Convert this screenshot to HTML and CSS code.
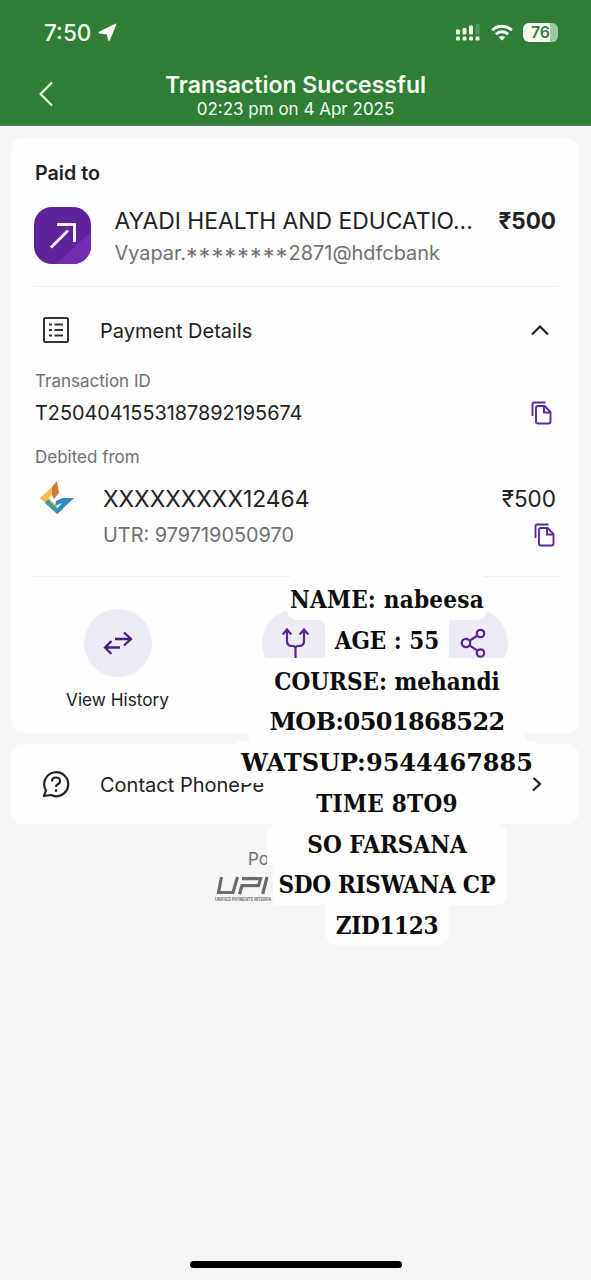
FILE: index.html
```html
<!DOCTYPE html>
<html lang="en">
<head>
<meta charset="utf-8">
<title>Transaction Successful</title>
<link rel="stylesheet" href="styles.css">
</head>
<body>
<div class="screen">
  <header class="top">
    <div class="status">
      <div class="status-left">
        <span class="clock">7:50</span>
        <svg width="19" height="19" viewBox="0 0 19 19"><path d="M17.500 1.500 11 17 9.500 10.500 1.500 9.500Z" fill="#fff" stroke="#fff" stroke-width="1.800" stroke-linejoin="round"/></svg>
      </div>
      <div class="status-right">
        <svg width="26" height="17" viewBox="0 0 26 17" fill="#eefbe9"><rect x="1" y="5.500" width="4" height="5" rx="1"/><rect x="7.500" y="4" width="4" height="6.500" rx="1"/><rect x="14" y="1.500" width="4" height="9" rx="1"/><rect x="20.500" y="0" width="4" height="10.500" rx="1" opacity=".2"/><rect x="1" y="12.500" width="4" height="4" rx="1.200"/><rect x="7.500" y="12.500" width="4" height="4" rx="1.200"/><rect x="14" y="12.500" width="4" height="4" rx="1.200"/><rect x="20.500" y="12.500" width="4" height="4" rx="1.200"/></svg>
        <svg class="wifi" width="22" height="17" viewBox="0 0 22 17" fill="none" stroke="#fff" stroke-width="2.900"><path d="M1.200 6.200a14 14 0 0 1 19.600 0"/><path d="M4.900 10.200a8.700 8.700 0 0 1 12.200 0"/><path d="M11 16.500 7.800 13.300a4.600 4.600 0 0 1 6.400 0Z" fill="#fff" stroke="none"/></svg>
        <span class="battery"><span class="battery-level">76</span></span>
      </div>
    </div>
    <div class="nav">
      <svg class="back" width="16" height="26" viewBox="0 0 16 26"><path d="M13.500 2 2.500 13l11 11" fill="none" stroke="#e8fbe4" stroke-width="2.200" stroke-linecap="round" stroke-linejoin="round"/></svg>
      <div class="titles">
        <h1>Transaction Successful</h1>
        <p>02:23 pm on 4 Apr 2025</p>
      </div>
    </div>
  </header>

  <main class="content">
    <section class="card">
      <h2 class="paid">Paid to</h2>
      <div class="payee">
        <svg class="tile" width="57" height="57" viewBox="0 0 57 57"><rect width="57" height="57" rx="18" fill="#5f239c"/><path d="M22 57 57 25v14a18 18 0 0 1-18 18Z" fill="#732db2"/><path d="M17 40.500 34 23.500M23 17.500h17.500V35" fill="none" stroke="#f8ebfa" stroke-width="3"/></svg>
        <div class="payee-text">
          <span class="payee-name">AYADI HEALTH AND EDUCATIO...</span>
          <span class="payee-vpa">Vyapar.<span class="stars">********</span>2871@hdfcbank</span>
        </div>
        <strong class="amount">₹500</strong>
      </div>
      <hr>
      <div class="row details">
        <svg class="lead" width="28" height="28" viewBox="0 0 28 28" fill="none" stroke="#333" stroke-width="2"><rect x="2" y="2" width="24" height="24" rx="1.500"/><path d="M7 8.500h3M12.500 8.500H21M7 14h3M12.500 14H21M7 19.500h3M12.500 19.500H21"/></svg>
        <span class="row-title">Payment Details</span>
        <svg class="chev" width="20" height="12" viewBox="0 0 20 12"><path d="M2 10.500 10 2.500l8 8" fill="none" stroke="#222" stroke-width="2.200"/></svg>
      </div>
      <div class="label label-id">Transaction ID</div>
      <div class="row txn">
        <span class="txn-id">T2504041553187892195674</span>
        <svg class="copy" width="21" height="24" viewBox="0 0 21 24" fill="none" stroke="#5a2a96" stroke-width="1.900"><path d="M1.500 15V3q0-1.500 1.500-1.500h11.500"/><path d="M7 5h6.500l6 6v9.500q0 2-2 2H7q-2 0-2-2V7q0-2 2-2Z" stroke-linejoin="round"/><path d="M13 5v6.500h6.500"/></svg>
      </div>
      <div class="label label-from">Debited from</div>
      <div class="row bank">
        <svg class="bank-logo" width="36" height="34" viewBox="0 0 36 34"><path d="M1 17 13 6v7l-3 4 8 9v6Z" fill="#f4bd4a"/><path d="M13 14V6l5-6 2 12-5 6Z" fill="#cf793d"/><path d="M9 18 6 22l12 11 6-5-6-1Z" fill="#459c96"/><path d="M18 33 35 17H23l-6 3-1 5 7-3-5 6Z" fill="#3188c2"/></svg>
        <span class="account">XXXXXXXXX12464</span>
        <span class="debit">₹500</span>
      </div>
      <div class="row utr">
        <span class="utr-id">UTR: 979719050970</span>
        <svg class="copy2" width="21" height="24" viewBox="0 0 21 24" fill="none" stroke="#5a2a96" stroke-width="1.900"><path d="M1.500 15V3q0-1.500 1.500-1.500h11.500"/><path d="M7 5h6.500l6 6v9.500q0 2-2 2H7q-2 0-2-2V7q0-2 2-2Z" stroke-linejoin="round"/><path d="M13 5v6.500h6.500"/></svg>
      </div>
      <hr>
      <div class="actions">
        <div class="action">
          <span class="disc"><svg width="30" height="24" viewBox="0 0 30 24" fill="none" stroke="#4b1c85" stroke-width="2.300"><path d="M12 8h16M21 1.500 28 8l-7 6.500M17 16.500H2M8.500 10 2 16.500 8.500 23"/></svg></span>
          <span class="action-label">View History</span>
        </div>
        <div class="action">
          <span class="disc"><svg width="28" height="32" viewBox="0 0 28 32" fill="none" stroke="#5a2690" stroke-width="2.200"><path d="M5 3v11q0 5 5 5h1q2.500 0 2.500 3v9M22 3v11q0 5-5 5h-1q-2.500 0-2.500 3M.7 7.500 5 2.500l4.300 5M17.700 7.500l4.300-5 4.300 5"/></svg></span>
        </div>
        <div class="action">
          <span class="disc"><svg width="28" height="30" viewBox="0 0 28 30" fill="none" stroke="#5a2690" stroke-width="2.300"><circle cx="6" cy="15" r="4.200"/><circle cx="20.500" cy="5.500" r="3.700"/><circle cx="20.500" cy="25" r="3.700"/><path d="m9.500 12.700 7.700-5M9.500 17.400l7.700 5"/></svg></span>
        </div>
      </div>
    </section>

    <section class="card contact row">
      <svg class="lead" width="28" height="28" viewBox="0 0 28 28" fill="none" stroke="#222" stroke-width="2.200"><path d="M2 26 4 20.500A12 12 0 1 1 9 25Z" stroke-linejoin="round"/><path d="M10 11.500q0-4 4-4t4 3.500q0 2.200-2.200 3.300Q14 15.200 14 17M14 19.200v2.500"/></svg>
      <span class="row-title">Contact PhonePe</span>
      <svg class="chev-right" width="12" height="18" viewBox="0 0 12 18"><path d="m2 2.500 7 6.500-7 6.500" fill="none" stroke="#222" stroke-width="2.200"/></svg>
    </section>

    <footer class="powered">
      <span class="powered-text">Po</span>
      <svg width="58" height="28" viewBox="0 0 58 28"><g fill="none" stroke="#6b6b6b" stroke-width="3.200"><path d="M7.500 2 4.500 17.500h14.500L23.500 2"/><path d="M25.500 19.200l2.500-8.500h16.500L46.500 3.600H28"/><path d="M53 2l-4.300 17"/></g><text class="upi-tag" x="1" y="25.500" textLength="56" lengthAdjust="spacingAndGlyphs">UNIFIED PAYMENTS INTERFA</text></svg>
    </footer>
  </main>

  <div class="home-bar"></div>

  <div class="note">
    <p class="n1">NAME: nabeesa</p>
    <p class="n2">AGE : 55</p>
    <p class="n3">COURSE: mehandi</p>
    <p class="n4">MOB:0501868522</p>
    <p class="n5">WATSUP:9544467885</p>
    <p class="n6">TIME 8TO9</p>
    <p class="n7">SO FARSANA</p>
    <p class="n8">SDO RISWANA CP</p>
    <p class="n9">ZID1123</p>
  </div>
</div>
</body>
</html>
```
FILE: styles.css
```css
* { box-sizing: border-box; margin: 0; padding: 0; }
body { background: #f6f6f6; font-family: Inter, "Liberation Sans", sans-serif; color: #222; }
svg { display: block; flex: none; overflow: visible; }
span, strong, h1, h2, p, .label { white-space: nowrap; }
.screen { position: relative; width: 591px; height: 1280px; display: flex; flex-direction: column; overflow: hidden; }

.top { height: 126px; background: #307d36; border-bottom: 2px solid #4c7f50; color: #f3fff0; }
.status { height: 65px; padding: 0 31px 0 44px; display: flex; justify-content: space-between; align-items: center; }
.status-left { display: flex; align-items: center; gap: 7px; }
.clock { font-size: 22.5px; font-weight: 500; }
.status-right { display: flex; align-items: center; }
.wifi { margin: 0 10px 0 10px; }
.battery { width: 37px; padding-right: 2px; }
.battery-level { display: block; width: 35px; height: 19px; border-radius: 6px; background: linear-gradient(90deg, #f2fced 77%, #a2c8a2 77%); color: #427747; font-size: 16px; line-height: 19px; font-weight: 600; text-align: center; }
.nav { display: flex; height: 59px; padding-left: 38px; padding-top: 6px; }
.back { margin-top: 10px; }
.titles { flex: 1; margin-right: 54px; text-align: center; }
.titles h1 { font-size: 23px; line-height: 28px; font-weight: 600; }
.titles p { font-size: 17px; line-height: 20px; }

.content { padding: 12px 12px 0 11px; }
.card { background: #fdfdfd; border-radius: 12px; }
.card:first-child { height: 595px; padding: 0 23px 0 24px; }
.paid { height: 69px; line-height: 70px; font-size: 19.7px; font-weight: 600; }
.payee { display: flex; height: 57px; margin-bottom: 22px; }
.tile { margin-left: -1px; }
.payee-text { display: flex; flex-direction: column; margin-left: 23.5px; }
.payee-name { font-size: 22.85px; line-height: 28px; }
.payee-vpa { font-size: 19.9px; line-height: 36px; color: #717171; }
.stars { font-size: 23px; letter-spacing: 1.3px; vertical-align: -5px; line-height: 1; }
.amount { margin-left: auto; font-size: 22.5px; line-height: 28px; font-weight: 700; }
hr { height: 1px; border: 0; background: #efefef; margin: 0 -3px 0 -2px; }
.row { display: flex; align-items: center; }
.lead { margin-left: 7px; }
.row-title { margin-left: 30px; font-size: 20px; line-height: 26px; padding-top: 1px; }
.details { height: 86px; }
.chev { margin-left: auto; margin-right: 6px; }
.label { font-size: 17px; color: #717171; }
.label-id { height: 16px; line-height: 16px; }
.txn { height: 48px; }
.txn-id { font-size: 19.85px; }
.copy { margin-left: auto; margin-right: 4px; }
.label-from { height: 40px; line-height: 40px; }
.bank { height: 42px; }
.bank-logo { margin-left: 4px; }
.account { margin-left: 28px; font-size: 22.8px; }
.debit { margin-left: auto; font-size: 22.5px; }
.utr { height: 32px; margin-bottom: 25px; }
.utr-id { margin-left: 68px; font-size: 19.9px; color: #717171; }
.copy2 { margin-left: auto; margin-right: 1px; }
.actions { display: grid; grid-template-columns: repeat(3, 178px); margin: 32px -9px 0 -6.5px; }
.action { display: flex; flex-direction: column; align-items: center; }
.disc { width: 68px; height: 68px; border-radius: 50%; background: #eeebf5; display: flex; align-items: center; justify-content: center; }
.action-label { margin-top: 11px; font-size: 17.2px; line-height: 24px; }
.contact { height: 80px; margin-top: 11px; padding: 0 24px; }
.chev-right { margin-left: auto; margin-right: 12px; }
.powered { margin-top: 24px; padding-left: 203px; }
.powered-text { display: block; padding-left: 34px; font-size: 17px; line-height: 22px; color: #717171; }
.powered svg { margin-top: 5px; }
.upi-tag { font-family: "Liberation Sans", sans-serif; font-size: 4.5px; font-weight: 700; fill: #666; }
.home-bar { width: 212px; height: 7px; margin: auto auto 12px; border-radius: 4px; background: #000; }

/* Typed caption laid over the receipt, one white band per line */
.note { position: absolute; top: 574px; left: 232px; width: 310px; display: flex; flex-direction: column; align-items: center; font-family: "DejaVu Serif Condensed", "DejaVu Serif", serif; font-stretch: semi-condensed; font-size: 24px; font-weight: 700; color: #0c0c0c; }
.note p { height: 41px; line-height: 41px; text-align: center; background: #fdfdfd; border-radius: 10px; }
.note .n1 { height: 46px; line-height: 51px; width: 200px; letter-spacing: .25px; }
.note .n2 { width: 124px; border-radius: 0; height: 38px; line-height: 41px; }
.note .n3 { width: 260px; height: 43px; line-height: 47px; border-radius: 0; }
.note .n4 { width: 276px; height: 40px; line-height: 41px; border-radius: 0; }
.note .n5 { width: 310px; height: 42px; line-height: 43px; border-radius: 10px 10px 30px 10px / 10px 10px 16px 10px; }
.note .n4, .note .n5 { font-family: "DejaVu Serif", serif; font-stretch: normal; }
.note .n4 { letter-spacing: -.6px; }
.note .n6 { width: 190px; border-radius: 0; letter-spacing: .3px; }
.note .n7 { width: 240px; border-radius: 10px 10px 0 0; }
.note .n8 { width: 234px; height: 40px; line-height: 40px; margin-left: 6px; padding-right: 6px; letter-spacing: -.3px; border-radius: 0 0 10px 0; }
.note .n9 { width: 124px; border-radius: 0 0 14px 14px; letter-spacing: -.3px; }
```
